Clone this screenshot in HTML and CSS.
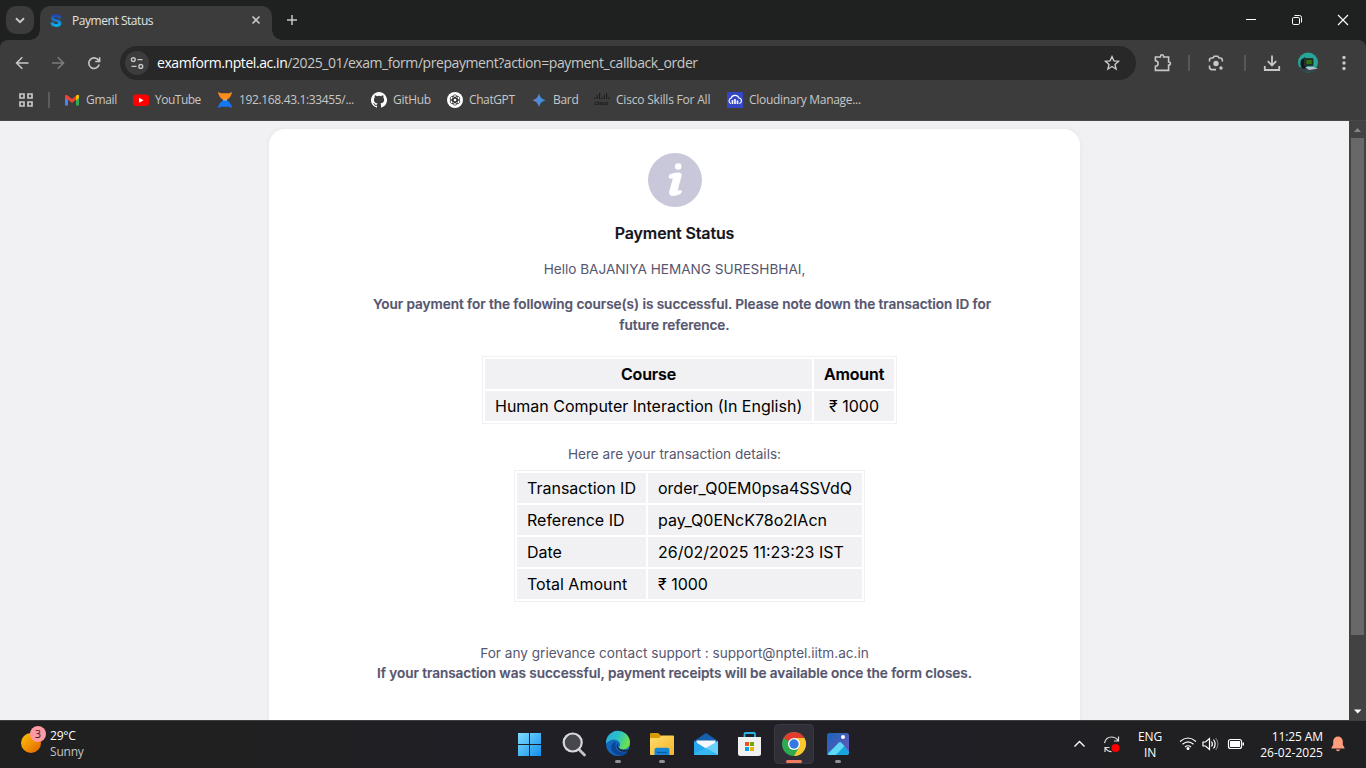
FILE: index.html
```html
<!DOCTYPE html>
<html lang="en">
<head>
<meta charset="utf-8">
<title>Payment Status</title>
<link rel="stylesheet" href="styles.css">
</head>
<body>
<div class="screen">
  <header class="tabstrip">
    <div class="tabsearch"><svg width="28" height="28"><path d="M10 12.2l4 4 4-4" class="ln w2"/></svg></div>
    <div class="tab">
      <span class="favicon">S</span>
      <span class="tabtitle">Payment Status</span>
      <svg class="tabclose" width="12" height="12"><path d="M2.5 2.5l7 7m0-7l-7 7" class="ln w16"/></svg>
    </div>
    <svg class="newtab" width="14" height="14"><path d="M7 2v10M2 7h10" class="ln w15"/></svg>
    <div class="wincontrols">
      <svg width="46" height="40"><path d="M18 19.5h10" stroke="#fff"/></svg>
      <svg width="46" height="40"><rect x="18.5" y="17.5" width="7" height="7" rx="1.3" fill="none" stroke="#fff"/><path d="M20.5 15.5h5q2 0 2 2v5" fill="none" stroke="#fff"/></svg>
      <svg width="46" height="40"><path d="M18 15l10 10m0-10l-10 10" stroke="#fff" stroke-width="1.1"/></svg>
    </div>
  </header>

  <div class="toolbar">
    <svg class="nav" width="120" height="46">
      <g class="ln w16"><path d="M28.500 23H17M22.300 17.300L16.600 23l5.700 5.700"/></g>
      <g class="ln w16 dim"><path d="M52 23h11.500M57.800 17.300L63.500 23l-5.700 5.700"/></g>
      <g class="ln w16"><path d="M98.800 20.800A5.300 5.300 0 1 0 99.200 24.500M99.600 17.200v4.300h-4.400"/></g>
    </svg>
    <div class="omnibox">
      <svg class="chip" width="24" height="24"><circle cx="12" cy="12" r="12" fill="#3c3c3c"/><g class="ln w14"><circle cx="8.300" cy="8.600" r="1.900"/><path d="M12.500 8.600h5M6.500 15.400h5"/><circle cx="15.800" cy="15.400" r="1.900"/></g></svg>
      <span class="url"><b>examform.nptel.ac.in</b>/2025_01/exam_form/prepayment?action=payment_callback_order</span>
      <svg class="star" width="16" height="16"><path d="M8 1.600l1.900 4.300 4.700.4-3.600 3.100 1.100 4.600L8 11.500 3.900 14 5 9.400 1.400 6.300l4.700-.4z" class="ln w14"/></svg>
    </div>
    <svg class="actions" width="230" height="46">
      <path d="M20 17h4.400v-.6a1.600 1.600 0 0 1 3.200 0v.6h5v5h.3a1.500 1.500 0 0 1 0 3h-.3v5.400H19.400V26.200a2.700 2.700 0 0 0 0-5.400V17z" class="ln w16"/>
      <path d="M53 15v16M109 15v16" stroke="#606060" stroke-width="1.500"/>
      <g class="ln w16"><path d="M73.500 21.500v-1.500q0-2 2-2h1.500l1.200-1.700h3.600l1.200 1.700h1.300q2 0 2 2v1.500M73.500 25.500v1.500q0 2.600 2.500 2.600h4"/></g>
      <circle cx="80" cy="23.500" r="2.700" fill="#c7c7c7"/><circle cx="85" cy="28" r="1.700" fill="#c7c7c7"/>
      <path d="M136 15.500v9.500M131.800 21.200l4.200 4.200 4.200-4.200M128.800 26v4h14.400v-4" class="ln w18"/>
      <circle cx="172" cy="22.500" r="10" fill="#26a69a"/><path d="M163 27h18a10 10 0 0 1-18 0z" fill="#37474f"/>
      <path d="M165 20l4-3 2 11-4 1q-4-4-2-9z" fill="#10181c"/><rect x="168" y="18" width="9.500" height="8" rx="1" fill="#26343a"/><rect x="169.300" y="19.300" width="7.500" height="5.200" fill="#17320d"/><path d="M170.300 21h5.500M170.300 23h5.500" stroke="#58a618"/><path d="M169 27h9l4 1.500-9 1.500z" fill="#b4c3c9"/>
      <g fill="#c7c7c7"><circle cx="208" cy="17.500" r="1.700"/><circle cx="208" cy="23" r="1.700"/><circle cx="208" cy="28.500" r="1.700"/></g>
    </svg>
  </div>

  <nav class="bookmarks">
    <svg class="apps" width="16" height="16"><path d="M2 2h4v4H2zM10 2h4v4h-4zM2 10h4v4H2zM10 10h4v4h-4z" fill="none" stroke="#c7c7c7" stroke-width="1.700"/></svg>
    <i class="sep"></i>
    <div class="bm gmail"><svg width="16" height="16"><path d="M1 4v9.500h3V6.500z" fill="#4285f4"/><path d="M15 4v9.500h-3V6.500z" fill="#34a853"/><path d="M1 4.200Q1 2.500 3 3l5 4 5-4v3.800L8 11 4 7.800v.6L1 6z" fill="#ea4335"/><path d="M12 3.800Q15 1.500 15 4.200V6l-3 2.400z" fill="#fbbc04"/></svg><span>Gmail</span></div>
    <div class="bm youtube"><svg width="16" height="16"><rect y="2.500" width="16" height="11.500" rx="3" fill="#f00"/><path d="M6 5.700l4.500 2.500L6 10.700z" fill="#fff"/></svg><span>YouTube</span></div>
    <div class="bm server"><svg width="16" height="16"><path d="M1 0l3 1.300h8L15 0q-.5 5-5.500 8h-3Q1.500 5 1 0z" fill="#fb8c20"/><path d="M1 16l3-1.300h8l3 1.300q-.5-5-5.500-8h-3Q1.500 11 1 16z" fill="#1476f0"/><path d="M6 8h4" stroke="#9cc4e8"/></svg><span>192.168.43.1:33455/...</span></div>
    <div class="bm github"><svg width="16" height="16"><path fill="#fff" d="M8 0a8 8 0 0 0-2.530 15.590c.4.070.55-.17.55-.38v-1.490c-2.230.48-2.700-.95-2.700-.95-.36-.92-.89-1.170-.89-1.170-.73-.5.060-.49.060-.49.800.06 1.230.83 1.230.83.720 1.220 1.870.87 2.330.66.070-.52.280-.87.510-1.070-1.780-.2-3.640-.89-3.640-3.950 0-.87.310-1.590.82-2.150-.08-.2-.36-1.020.08-2.120 0 0 .67-.21 2.200.82a7.600 7.600 0 0 1 4 0c1.530-1.040 2.200-.82 2.200-.82.440 1.100.16 1.920.08 2.120.51.560.82 1.270.82 2.150 0 3.070-1.870 3.750-3.650 3.950.29.25.54.73.54 1.480v2.200c0 .21.150.46.550.38A8 8 0 0 0 8 0z"/></svg><span>GitHub</span></div>
    <div class="bm chatgpt"><svg width="16" height="16"><circle cx="8" cy="8" r="8" fill="#fff"/><g fill="none" stroke="#222" stroke-width=".7"><rect x="5.800" y="2.800" width="4.400" height="7.400" rx="2.200"/><rect x="5.800" y="2.800" width="4.400" height="7.400" rx="2.200" transform="rotate(60 8 8)"/><rect x="5.800" y="2.800" width="4.400" height="7.400" rx="2.200" transform="rotate(120 8 8)"/><rect x="5.800" y="2.800" width="4.400" height="7.400" rx="2.200" transform="rotate(180 8 8)"/><rect x="5.800" y="2.800" width="4.400" height="7.400" rx="2.200" transform="rotate(240 8 8)"/><rect x="5.800" y="2.800" width="4.400" height="7.400" rx="2.200" transform="rotate(300 8 8)"/></g></svg><span>ChatGPT</span></div>
    <div class="bm bard"><svg width="16" height="16"><defs><linearGradient id="bd"><stop offset="0" stop-color="#8a6fc0"/><stop offset=".5" stop-color="#4590dc"/><stop offset="1" stop-color="#388bd0"/></linearGradient></defs><path d="M7 1.600q1.300 5.400 6.700 6.700Q8.300 9.600 7 15 5.700 9.600.3 8.300 5.700 7 7 1.600z" fill="url(#bd)"/></svg><span>Bard</span></div>
    <div class="bm cisco"><span class="ciscologo"><svg width="16" height="7"><path d="M1 4v2M3.300 2v4M5.600 0v6M8 4v2M10.300 2v4M12.600 0v6M15 4v2" stroke="#1b1b1b"/></svg><em>cisco</em></span><span>Cisco Skills For All</span></div>
    <div class="bm cloudinary"><svg width="16" height="16"><rect width="16" height="16" fill="#3448c5"/><path d="M4 11.500a2.700 2.700 0 0 1 0-5.200 4.300 4.300 0 0 1 8-.3 2.800 2.800 0 0 1 .3 5.500" fill="none" stroke="#fff" stroke-width="1.100"/><path d="M5.500 8v4M8 7v5M10.500 8.500V12" stroke="#fff" stroke-width="1.600"/></svg><span>Cloudinary Manage...</span></div>
  </nav>

  <div class="viewport">
    <main class="page">
      <section class="card">
        <svg class="info" width="54" height="54"><circle cx="27" cy="27" r="27" fill="#c8c8da"/><circle cx="30.200" cy="13.500" r="3.300" fill="#fff"/><path d="M20.700 24.300q-.2-2.800 2.800-3.600 3.500-1.300 6.700-1.300 4.200 0 3.300 3.800L29.700 37.300h3.400q1.300.4.500 2-1.300 3.200-8.600 3.700-4.200 0-3.900-4l3.700-13.500h-3.200q-.8-.3-.9-1.200z" fill="#fff"/></svg>
        <h1>Payment Status</h1>
        <p class="hello">Hello BAJANIYA HEMANG SURESHBHAI,</p>
        <p class="msg"><span class="l1">Your payment for the following course(s) is successful. Please note down the transaction ID for</span><span class="l2">future reference.</span></p>
        <table class="courses">
          <colgroup><col class="c327"><col class="c80"></colgroup>
          <tr><th>Course</th><th>Amount</th></tr>
          <tr><td>Human Computer Interaction (In English)</td><td>₹ 1000</td></tr>
        </table>
        <p class="here">Here are your transaction details:</p>
        <table class="details">
          <colgroup><col class="c129"><col class="c214"></colgroup>
          <tr><td>Transaction ID</td><td>order_Q0EM0psa4SSVdQ</td></tr>
          <tr><td>Reference ID</td><td>pay_Q0ENcK78o2IAcn</td></tr>
          <tr><td>Date</td><td>26/02/2025 11:23:23 IST</td></tr>
          <tr><td>Total Amount</td><td>₹ 1000</td></tr>
        </table>
        <p class="grievance">For any grievance contact support : support@nptel.iitm.ac.in</p>
        <p class="receipts">If your transaction was successful, payment receipts will be available once the form closes.</p>
      </section>
    </main>
    <div class="scrollbar">
      <svg width="17" height="17"><path d="M5 11h7L8.500 7z" fill="#868686"/></svg>
      <i class="thumb"></i>
      <svg width="17" height="17"><path d="M5 6.500h7.500L8.700 10.500z" fill="#fff"/></svg>
    </div>
  </div>

  <footer class="taskbar">
    <div class="weather">
      <div class="sun"><b>3</b></div>
      <div class="wtext"><span>29°C</span><span class="cond">Sunny</span></div>
    </div>
    <div class="dock">
      <svg width="44" height="47"><defs><linearGradient id="wn" x2="1" y2="1"><stop offset="0" stop-color="#7fdcfc"/><stop offset="1" stop-color="#1290ee"/></linearGradient></defs><path d="M11 13h11v11H11zM23 13h11v11H23zM11 25h11v11H11zM23 25h11v11H23z" fill="url(#wn)"/></svg>
      <svg width="44" height="47"><path d="M28.500 30l5 5" stroke="#c4c4c8" stroke-width="2.800" stroke-linecap="round"/><circle cx="21.700" cy="22.500" r="9" fill="#47474f" stroke="#d8d8dc" stroke-width="2.200"/></svg>
      <svg width="44" height="47"><defs><linearGradient id="ed" x2="1" y2=".4"><stop offset="0" stop-color="#2aa7e0"/><stop offset=".55" stop-color="#2bc3c4"/><stop offset="1" stop-color="#6be04f"/></linearGradient></defs><circle cx="23" cy="24" r="12" fill="#1267bd"/><path d="M11 23.500a12 12 0 0 1 24-1.500q.4 7-7 7.200-4.500 0-3.800-2.500 1.800-2.200 0-4.800-5.500-5.500-13.200 1.600z" fill="url(#ed)"/><path d="M21 21.500q-2.500 10 7.500 11 3 0 5-1.600-2.500 4-7 4.800Q15 34.500 16.500 25.500q1-3 4.500-4z" fill="#0c4696"/><path d="M22.700 23q-1 5.500 4.800 7 4 .6 6.800-.5l-1 1.800Q24.500 33 21.800 27q-.4-2.500.9-4z" fill="#202127"/><rect x="20" y="40" width="6" height="3" rx="1.500" fill="#8f8f94"/></svg>
      <svg width="44" height="47"><defs><linearGradient id="fd" x2="1" y2="1"><stop offset="0" stop-color="#ffdc6b"/><stop offset="1" stop-color="#f5b52c"/></linearGradient></defs><path d="M11 14q0-1 1-1h7l3 2.500V20H11z" fill="#d99a08"/><path d="M11 18h9l2.500-2.500H34q1 0 1 1v17.700q0 .8-1 .8H12q-1 0-1-.8z" fill="url(#fd)"/><path d="M15.500 35V30q0-2.300 2.300-2.300h10.400q2.300 0 2.300 2.300v5z" fill="#1687d8"/><path d="M18 32.500h10" stroke="#075ba6" stroke-width="1.300"/><rect x="20" y="40" width="6" height="3" rx="1.500" fill="#8f8f94"/></svg>
      <svg width="44" height="47"><path d="M11 21l12-8 12 8v6H11z" fill="#1460ad"/><path d="M13.500 20.500h19v5.500L23 31l-9.500-5z" fill="#f5f8fb"/><path d="M11 21l12 7.500L35 35H12q-1 0-1-1z" fill="#27a8ef"/><path d="M35 21L22 28.500l13 6.500z" fill="#68d1fa"/><path d="M11 34l12-6 12 7H12q-1 0-1-1z" fill="#36b7f1"/></svg>
      <svg width="44" height="47"><path d="M17.500 18v-4q0-1 1-1h8.500q1 0 1 1v4" fill="none" stroke="#29b5e8" stroke-width="1.800"/><path d="M11 17h23V33.500q0 2.500-2.500 2.500h-18Q11 36 11 33.500z" fill="#f1f1f2"/><path d="M18 22h4v4h-4z" fill="#f25022"/><path d="M23 22h4v4h-4z" fill="#6ea800"/><path d="M18 27h4v4h-4z" fill="#00a4ef"/><path d="M23 27h4v4h-4z" fill="#f5b000"/></svg>
      <svg width="44" height="47"><rect x="3.500" y="4.500" width="39" height="39" rx="4" fill="#302f38" stroke="#3a3942"/><circle cx="23" cy="24" r="12" fill="#2da94f"/><path d="M23 24L12.600 18A12 12 0 0 1 33.400 18z" fill="#e33b2e"/><path d="M23 18h10.400A12 12 0 0 1 23 36l5.200-9z" fill="#fdc72f"/><circle cx="23" cy="24" r="6" fill="#fff"/><circle cx="23" cy="24" r="4.700" fill="#3578e5"/><rect x="15" y="40" width="16" height="3" rx="1.500" fill="#f07c60"/></svg>
      <svg width="44" height="47"><defs><linearGradient id="ph" x2="1" y2="1"><stop offset="0" stop-color="#1566bd"/><stop offset="1" stop-color="#7655b5"/></linearGradient><clipPath id="pc"><rect x="12" y="13" width="22" height="22" rx="2.500"/></clipPath></defs><g clip-path="url(#pc)"><path d="M12 13h22v24H12z" fill="url(#ph)"/><path d="M10 36l13.500-13q1.500-1.500 3 0L38 36z" fill="#18a5df"/><path d="M10 37l13.500-14q1.500-1.500 3 0l3 3L19 37z" fill="#5fd8f6"/></g><circle cx="28" cy="17" r="2" fill="#fff"/><rect x="20" y="40" width="6" height="3" rx="1.500" fill="#8f8f94"/></svg>
    </div>
    <div class="tray">
      <svg class="t1" width="60" height="48"><path d="M6.500 26.500L11.500 21.500l5 5" fill="none" stroke="#fff" stroke-width="1.400"/><g fill="none" stroke="#ddd" stroke-width="1.200"><path d="M36.500 23q1.500-6 7-6 4 0 6.500 3.500M50.500 16.500v4.500h-4.500M41.500 27.500h-4.500v4.500M37.500 28q2 3.500 6 3.700"/></g><circle cx="47.500" cy="28" r="4" fill="#f00"/></svg>
      <div class="lang"><span>ENG</span><span>IN</span></div>
      <svg class="t2" width="70" height="48"><g fill="none" stroke="#fff" stroke-width="1.200"><path d="M2 21.500q8-7 16 0M4.500 24.300q5.500-4.800 11 0M7 27q3-2.500 6 0"/><path d="M25 22h2.500l4-3.500v11l-4-3.500H25z"/><path d="M33.500 21.500q1.800 2.500 0 5M35.500 19.500q3.300 4.500 0 9"/><path d="M37.700 18q4.500 6 0 12" stroke="#777"/><rect x="50.500" y="19.500" width="13" height="9" rx="2"/></g><circle cx="10" cy="28.500" r="1.500" fill="#fff"/><path d="M52 21h10v6H52zM64.500 22.500h1.500v3h-1.500z" fill="#fff"/></svg>
      <div class="clock"><span>11:25 AM</span><span class="date">26-02-2025</span></div>
      <svg class="bell" width="16" height="18"><path d="M8 1.500a4.800 4.800 0 0 1 4.800 4.800v3.500l1.700 3v.7h-13v-.7l1.700-3V6.300A4.800 4.800 0 0 1 8 1.500zM5.800 14.500h4.400q-.4 1.700-2.200 1.700t-2.200-1.700z" fill="#ff9d7c"/></svg>
    </div>
  </footer>
</div>
</body>
</html>
```
FILE: styles.css
```css
* { box-sizing: border-box; }
body { margin: 0; overflow: hidden; font-family: "Open Sans", "Noto Sans", sans-serif; }
svg { display: block; flex: none; }
h1, p { margin: 0; }
.screen { width: 1366px; height: 768px; display: flex; flex-direction: column; overflow: hidden; background: linear-gradient(#1f2120 60px, #3c3c3c 60px); }
.ln { fill: none; stroke: #c7c7c7; }
.w2 { stroke-width: 2; } .w18 { stroke-width: 1.8; } .w16 { stroke-width: 1.6; } .w15 { stroke-width: 1.5; } .w14 { stroke-width: 1.4; }
.dim { stroke: #7c7c7c; }

.tabstrip { height: 40px; flex: none; display: flex; align-items: center; padding-left: 6px; background: #1f2120; }
.tabsearch { width: 28px; height: 28px; border-radius: 10px; background: #3c3c3c; }
.tab { position: relative; width: 232px; height: 34px; margin: 6px 0 0 6px; padding: 0 10px; display: flex; align-items: center; background: #3c3c3c; border-radius: 10px 10px 0 0; }
.tab::before, .tab::after { content: ""; position: absolute; bottom: 0; width: 10px; height: 10px; }
.tab::before { left: -10px; background: radial-gradient(circle at 0 0, transparent 9.5px, #3c3c3c 10px); }
.tab::after { right: -10px; background: radial-gradient(circle at 100% 0, transparent 9.5px, #3c3c3c 10px); }
.favicon { width: 12px; margin-top: -5px; font: 900 18px/20px Inter, sans-serif; background: linear-gradient(#2639a5 15%, #05b2ee 75%); -webkit-background-clip: text; background-clip: text; color: transparent; }
.tabtitle { margin: -6px 0 0 10px; font-size: 12px; letter-spacing: -.45px; color: #e3e3e3; white-space: nowrap; flex: 1; }
.tabclose { margin-top: -6px; }
.newtab { margin-left: 13px; }
.wincontrols { display: flex; margin-left: auto; }

.toolbar { height: 46px; flex: none; display: flex; align-items: center; background: #3c3c3c; border-radius: 8px 8px 0 0; }
.omnibox { width: 1016px; height: 34px; display: flex; align-items: center; padding: 0 16px 0 5px; border-radius: 17px; background: #282828; }
.url { margin: -2px 0 0 8px; flex: 1; font-size: 14px; letter-spacing: -.43px; color: #c7c7c7; white-space: nowrap; }
.url b { font-weight: 400; color: #fff; }

.bookmarks { height: 35px; flex: none; display: flex; align-items: center; padding: 0 0 7px 18px; background: #3c3c3c; border-bottom: 1px solid #484848; color: #c7c7c7; font-size: 12px; letter-spacing: -.3px; white-space: nowrap; }
.sep { width: 2px; height: 16px; margin: 0 14px 0 14px; background: #5c5c5c; }
.bm { display: flex; align-items: center; gap: 6px; }
.gmail { width: 69px; } .youtube { width: 84px; letter-spacing: -.5px; } .server { width: 154px; letter-spacing: -.35px; } .github { width: 76px; } .chatgpt { width: 85px; letter-spacing: -.4px; } .bard { width: 62px; gap: 5px; } .cisco { width: 133px; letter-spacing: -.2px; }
.ciscologo { width: 16px; display: flex; flex-direction: column; }
.ciscologo em { font: 700 6px/6px "Open Sans", sans-serif; letter-spacing: -.1px; color: #1b1b1b; }

.viewport { height: 599px; flex: none; display: flex; }
.page { width: 1349px; padding: 8px 0 0 269px; background: #f1f1f4; overflow: hidden; }
.card { width: 811px; height: 620px; padding-top: 24px; display: flex; flex-direction: column; align-items: center; background: #fff; border-radius: 16px 16px 0 0; box-shadow: 0 0 5px rgba(40,40,70,.06); font-family: Inter, sans-serif; font-size: 13.6px; line-height: 21px; color: #56566f; white-space: nowrap; }
h1 { margin-top: 14px; font-size: 16px; line-height: 24px; font-weight: 600; letter-spacing: -.14px; color: #15151c; -webkit-text-stroke: .15px; }
.hello { margin-top: 14px; }
.msg { margin-top: 14px; display: flex; flex-direction: column; align-items: center; font-weight: 600; letter-spacing: -.05px; -webkit-text-stroke: .15px; }
.l1 { padding-left: 15px; }
table { table-layout: fixed; margin-left: 30px; border: 1px solid #f1f1f3; border-spacing: 2px; font-size: 16px; color: #000; }
.courses { width: 415px; margin-top: 20px; text-align: center; }
.details { width: 351px; margin-top: 5px; }
.c327 { width: 327px; } .c80 { width: 80px; } .c129 { width: 129px; } .c214 { width: 214px; }
td, th { height: 30px; padding: 0 10px; background: #f1f1f3; }
th { font-weight: 600; letter-spacing: -.15px; -webkit-text-stroke: .15px; }
.here { margin-top: 20px; }
.grievance { margin-top: 41px; line-height: 20px; }
.receipts { line-height: 20px; font-weight: 600; letter-spacing: -.05px; -webkit-text-stroke: .15px; }

.scrollbar { width: 17px; display: flex; flex-direction: column; align-items: center; background: #424242; }
.thumb { width: 13px; height: 497px; margin-bottom: auto; background: #686868; }

.taskbar { height: 48px; flex: none; display: flex; background: linear-gradient(90deg, #202020 200px, #201f26 480px, #201f26 900px, #202022 1200px); border-top: 1px solid #3f3f41; color: #fff; font-size: 12px; }
.weather { width: 507px; display: flex; padding-left: 21px; }
.sun { position: relative; width: 20px; height: 20px; margin-top: 12px; border-radius: 50%; background: linear-gradient(135deg, #ffc505, #e36000); }
.sun b { position: absolute; left: 9px; top: -7px; width: 16px; height: 16px; border-radius: 50%; background: #ff99a4; color: #2a1a1c; font: 400 11px/16px "Open Sans", sans-serif; text-align: center; }
.wtext { margin: 7px 0 0 9px; display: flex; flex-direction: column; line-height: 16px; letter-spacing: -.2px; }
.cond { color: #c4c4c4; }
.dock { display: flex; margin-top: -1px; }
.tray { margin: -1px 20px 0 auto; display: flex; align-items: center; line-height: 16px; }
.t1 { margin-right: 7px; }
.lang { width: 30px; padding-top: 1px; display: flex; flex-direction: column; align-items: center; letter-spacing: -.2px; }
.t2 { margin-left: 13px; }
.clock { width: 75px; padding-top: 1px; display: flex; flex-direction: column; align-items: flex-end; letter-spacing: -.1px; }
.date { letter-spacing: .02px; }
.bell { margin-left: 7px; }
```
